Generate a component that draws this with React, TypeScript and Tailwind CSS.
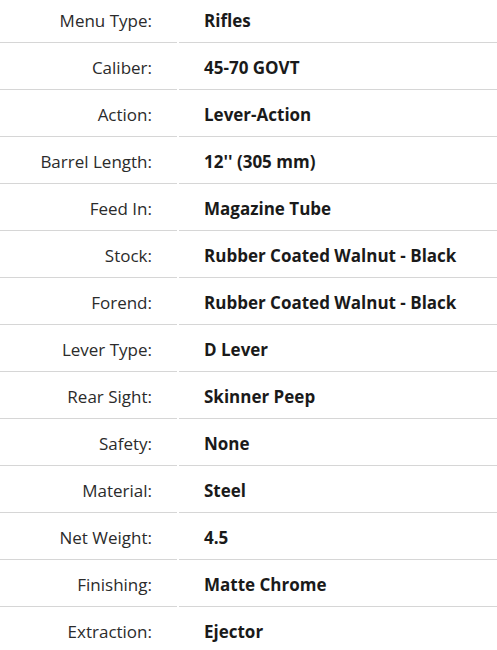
import React from "react";

const rows: [string, string][] = [
  ["Menu Type:", "Rifles"],
  ["Caliber:", "45-70 GOVT"],
  ["Action:", "Lever-Action"],
  ["Barrel Length:", "12'' (305 mm)"],
  ["Feed In:", "Magazine Tube"],
  ["Stock:", "Rubber Coated Walnut - Black"],
  ["Forend:", "Rubber Coated Walnut - Black"],
  ["Lever Type:", "D Lever"],
  ["Rear Sight:", "Skinner Peep"],
  ["Safety:", "None"],
  ["Material:", "Steel"],
  ["Net Weight:", "4.5"],
  ["Finishing:", "Matte Chrome"],
  ["Extraction:", "Ejector"],
];

export default function App() {
  return (
    <div className="w-[497px] h-[650px] overflow-hidden bg-white" style={{ fontFamily: '"Open Sans", "Noto Sans", sans-serif' }}>
      <div className="flex flex-col">
        {rows.map(([label, value], i) => (
          <div key={label} className="flex gap-[2px]">
            <div
              className={`w-[177px] shrink-0 border-b border-[#d6d6d6] flex items-center justify-end pr-[25px] text-[17px] text-[#2b2b2b] ${
                i === 0 ? "h-[43px]" : "h-[47px] pt-[4px]"
              }`}
            >
              {label}
            </div>
            <div
              className={`flex-1 border-b border-[#d6d6d6] flex items-center pl-[25px] text-[17px] font-bold text-[#1a1a1a] ${
                i === 0 ? "h-[43px]" : "h-[47px] pt-[4px]"
              }`}
            >
              {value}
            </div>
          </div>
        ))}
      </div>
    </div>
  );
}
